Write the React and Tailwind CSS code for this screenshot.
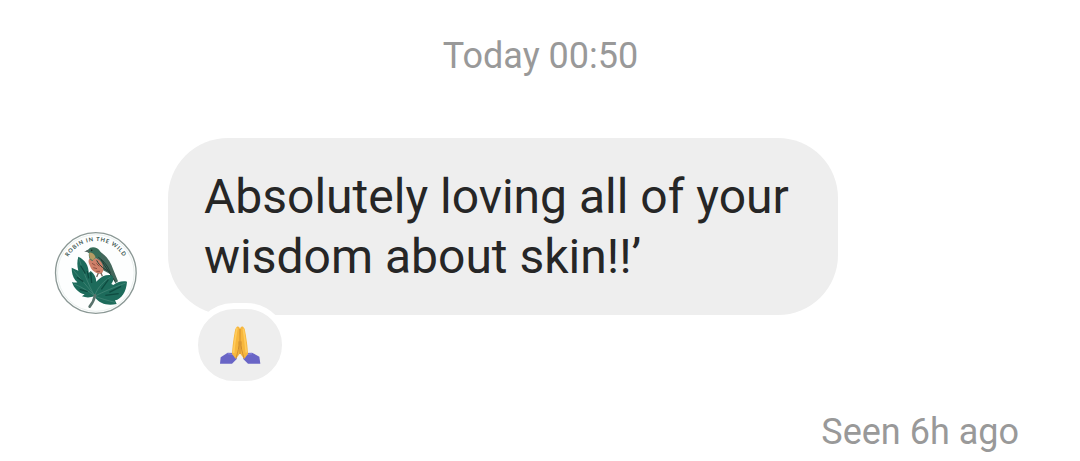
import React from 'react';

const Avatar = () => {
    return (
        <svg viewBox="0 0 300 300" className="h-[100px] w-[100px] shrink-0" role="img">
            <circle cx="149.5" cy="150" r="121" fill="#fdfefe" stroke="#8b9895" strokeWidth="4" />
            <circle cx="149.5" cy="150" r="115" fill="none" stroke="#e0e8e6" strokeWidth="2" />
            <defs>
                <path id="ring" d="M 66 103 A 96 96 0 0 1 233 103" />
            </defs>
            <text fontFamily="Lato, sans-serif" fontSize="17" fontWeight="700" fill="#3e5752">
                <textPath href="#ring" startOffset="1" textLength="199" lengthAdjust="spacing">ROBIN IN THE WILD</textPath>
            </text>

            {/* Bird */}
            <path d="M160 84 C181 98 195 117 201 138 L216 175 L208 181 L192 153 L166 139 L149 112 Z" fill="#43675b" />
            <path d="M130 107 C142 103 157 105 166 118 C174 132 174 146 166 153 C151 152 137 143 133 131 C129 121 125 115 130 107 Z" fill="#cf8069" />
            <path d="M119 84 L128 79 C131 72 144 70 153 76 C164 82 169 98 163 106 C152 103 144 106 139 114 C130 110 127 102 129 91 Z" fill="#366d59" />
            <path d="M130 89 C137 87 146 94 149 103 L141 112 C132 109 128 102 130 89 Z" fill="#b59b63" />
            <path d="M114 86 L129 80 L129 87 Z" fill="#596461" />
            <circle cx="137" cy="82" r="2.5" fill="#172b25" />
            <path d="M157 103 C173 114 187 130 193 150 M152 112 C161 130 176 139 190 146 M165 110 L207 175" fill="none" stroke="#203e35" strokeWidth="3" />
            <path d="M138 121 L148 127 M142 134 L153 137 M151 121 L160 130 M151 145 L162 145" stroke="#8e4e40" strokeWidth="3" />
            <path d="M157 150 L152 162 M165 150 L169 160" stroke="#75635a" strokeWidth="4" />

            {/* Leaf */}
            <path d="M97 101 C93 114 93 128 97 143 L77 134 C77 149 80 161 88 172 L94 178 C88 180 82 178 78 177 C83 194 97 210 116 214 L108 220 C120 225 134 224 145 220 C161 245 188 249 212 243 L207 232 C227 228 241 206 243 176 C228 173 212 178 202 186 L196 183 C203 175 204 163 197 157 C181 154 167 160 156 171 L151 176 C150 162 144 151 134 144 L128 150 C129 130 118 110 97 101 Z" fill="#1d6b5b" />
            <path d="M99 107 C111 145 127 184 146 220 M82 142 C102 167 125 190 145 216 M84 183 C103 190 126 203 145 218 M194 162 C174 174 156 191 147 216 M239 180 C204 193 173 206 147 219 M207 238 C184 232 165 227 147 220" fill="none" stroke="#4b8b7b" strokeWidth="2" />
            <path d="M104 128 L118 152 M124 144 L128 166 M93 163 L112 176 M101 199 L125 206 M134 150 L137 180 M187 170 L166 199 M225 190 L190 208 M218 212 L178 217" fill="none" stroke="#0e4b40" strokeWidth="4" />
            <path d="M147 217 C145 230 138 242 131 251" fill="none" stroke="#59726c" strokeWidth="8" strokeLinecap="round" />
        </svg>
    );
};

const FoldedHands = () => {
    return (
        <svg viewBox="0 0 126 116" className="h-[38.7px] w-[42px]" role="img">
            <path d="M45 81 L26 80 L5 94 L3 113 L39 113 L54 98 Z" fill="#6965c6" />
            <path d="M81 81 L99 80 L121 92 L124 113 L87 113 L72 98 Z" fill="#6965c6" />
            <path d="M26 83 L45 86 L50 96 M99 83 L81 86 L76 96" fill="none" stroke="#8580dc" strokeWidth="4" />
            <path d="M53 3 C58 0 62 3 63 9 L63 82 L51 99 L39 84 C40 65 43 38 49 9 Z" fill="#f7b73d" />
            <path d="M73 3 C68 0 64 3 63 9 L63 82 L75 99 L87 84 C86 65 83 38 77 9 Z" fill="#f7b73d" />
            <path d="M54 6 C49 34 45 62 44 81 M73 8 C77 34 80 61 82 80" fill="none" stroke="#ffcb5c" strokeWidth="5" />
            <path d="M63 9 V84 M60 46 C61 62 57 78 51 96 M66 46 C65 62 69 78 75 96" fill="none" stroke="#c7862f" strokeWidth="2.5" />
        </svg>
    );
};

const App = () => {
    return (
        <div className="flex h-[461px] w-[1080px] flex-col overflow-hidden bg-white font-['Roboto',sans-serif]">
            <p className="mt-[35px] pl-px text-center text-[36px] leading-[42px] text-[#999999]">Today 00:50</p>

            <div className="mt-[61px] flex pl-[46px]">
                <div className="mt-[85px]">
                    <Avatar />
                </div>
                <div className="ml-[22px] flex flex-col items-start">
                    <div className="h-[177px] w-[670px] rounded-[60px] bg-[#eeeeee] pt-[29px] pl-[36px] text-[48px] leading-[60px] text-[#262626]">
                        <p>Absolutely loving all of your</p>
                        <p>wisdom about skin!!’</p>
                    </div>
                    <div className="z-10 -mt-[12px] ml-[24px] flex h-[84px] w-[96px] items-center justify-center rounded-full border-6 border-white bg-[#eeeeee]">
                        <FoldedHands />
                    </div>
                </div>
            </div>

            <p className="mt-[24px] pr-[61px] text-right text-[36px] leading-[42px] text-[#999999]">Seen 6h ago</p>
        </div>
    );
};

export default App;
